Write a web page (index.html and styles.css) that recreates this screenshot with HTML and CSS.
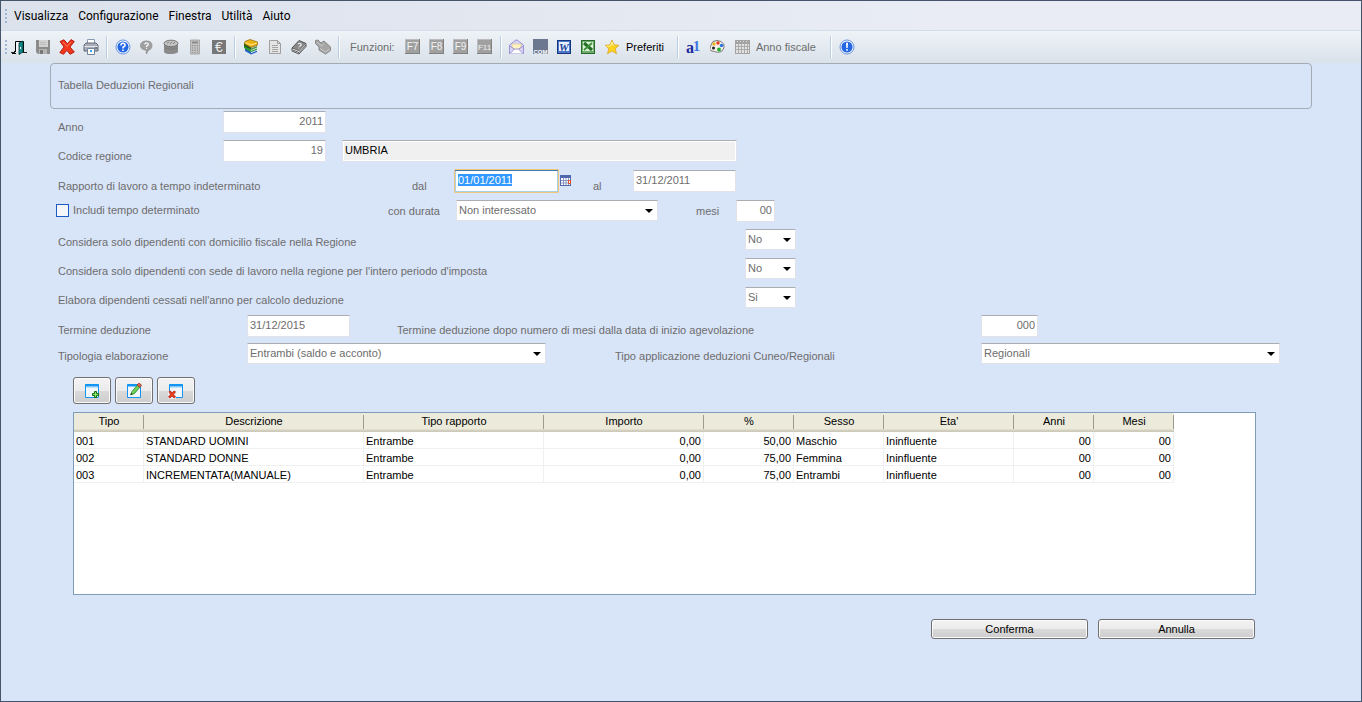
FILE: index.html
```html
<!DOCTYPE html>
<html lang="it">
<head>
<meta charset="utf-8">
<title>Tabella Deduzioni Regionali</title>
<link rel="stylesheet" href="styles.css">
</head>
<body>
<div class="window">
  <nav class="menubar" aria-label="Menu">
    <span class="grip"></span>
    <button class="menu" type="button">Visualizza</button>
    <button class="menu" type="button">Configurazione</button>
    <button class="menu" type="button">Finestra</button>
    <button class="menu" type="button">Utilità</button>
    <button class="menu" type="button">Aiuto</button>
  </nav>

  <div class="toolbar" role="toolbar" aria-label="Strumenti">
    <span class="grip"></span>
    <button class="tool" type="button" aria-label="Esci"><svg viewBox="0 0 16 16"><path d="M0 13.500h4M11 13.500h5" stroke="#222"/><path d="M4.500 13V2.500h8v11" fill="#f4f7fa" stroke="#000"/><path d="M1 14.500h4M3 12.500h2" stroke="#000"/><path d="M8 4l4-2v11l-4 2.500z" fill="#138a8a" stroke="#033" stroke-width=".8"/><path d="M9.500 8v2" stroke="#fff"/></svg></button>
    <button class="tool" type="button" aria-label="Salva"><svg viewBox="0 0 16 16"><path d="M1 1h14v14H3l-2-2z" fill="#8b8b8b"/><path d="M4 1h9v7H4z" fill="#d2d2d2"/><path d="M4 10h8v5H4z" fill="#b4b4b4"/><path d="M5 11h3v4H5z" fill="#777"/><path d="M5 3.500h6M5 5.500h6" stroke="#bbb"/></svg></button>
    <button class="tool" type="button" aria-label="Elimina"><svg viewBox="0 0 16 16"><path d="M1 2.500L5 .8l3.500 4L12 .6l3.300 1.900L11 8l4.300 5-4.300 2.300-3-4-3.500 4L.8 13.500 5 8z" fill="#f0371b" stroke="#b41508" stroke-width=".9"/><path d="M4 3l4 4.500L12 3" fill="none" stroke="#ff8a6a" stroke-width=".8"/></svg></button>
    <button class="tool" type="button" aria-label="Stampa"><svg viewBox="0 0 16 16"><path d="M4.500.5h7V6h-7z" fill="#fff" stroke="#879ab3"/><path d="M1 6l2-2h10l2 2v6H1z" fill="#a9adb9" stroke="#5a6070" stroke-width=".9"/><path d="M1.500 7.500h13" stroke="#e2e4ea"/><path d="M4.500 9.500h7v6h-7z" fill="#fff" stroke="#74829b"/><path d="M7 11h2v2H7z" fill="#3aa2ee"/><path d="M12 9h2" stroke="#444"/></svg></button>
    <span class="sep"></span>
    <button class="tool" type="button" aria-label="Guida"><svg viewBox="0 0 16 16"><circle cx="8" cy="8" r="7" fill="#fff" stroke="#5585dc" stroke-width=".9"/><circle cx="8" cy="8" r="5.600" fill="#2467e4"/><path d="M5.900 6.500q0-2.200 2.100-2.200t2.100 1.900Q10.100 7.200 8 8.200v1.300" fill="none" stroke="#fff" stroke-width="1.500"/><path d="M7.200 10.400h1.600v1.500H7.200z" fill="#fff"/></svg></button>
    <button class="tool" type="button" aria-label="Commenti"><svg viewBox="0 0 16 16"><path d="M7.500 2c4 0 5.500 2 5.500 4.500S11.500 11 9.500 11l-2 4-.5-4C3.500 11 1.500 9 1.500 6.500S3.500 2 7.500 2z" fill="#a0a0a0" stroke="#8a8a8a" stroke-width=".7"/><path d="M5.700 5.400q.2-1.600 1.900-1.600T9.300 5.400Q9.300 6.400 7.500 7v1M7.500 8.700v1.100" fill="none" stroke="#fff" stroke-width="1.200"/></svg></button>
    <button class="tool" type="button" aria-label="Archivio"><svg viewBox="0 0 16 16"><path d="M1 5v8q1 2 6.500 2T15 13V5z" fill="#8a8a8a"/><ellipse cx="8" cy="4.500" rx="7" ry="3.300" fill="#c2c2c2" stroke="#6a6a6a" stroke-width=".9"/><path d="M4 4.500l2-1.500M7 5l2-2M10 5l2-2" stroke="#777" stroke-width=".8"/><path d="M2 9q6 2.500 12 0" fill="none" stroke="#7c7c7c"/></svg></button>
    <button class="tool" type="button" aria-label="Calcolatrice"><svg viewBox="0 0 16 16"><path d="M3.500 1h9v14h-9z" fill="#c4c4c4" stroke="#9d9d9d" stroke-width=".8"/><path d="M5 3.500h6" stroke="#8a8a8a" stroke-width="2"/><path d="M5.500 6v8M8 6v8M10.500 6v8" stroke="#8c8c8c" stroke-width="1.300" stroke-dasharray="1.200 1.200"/></svg></button>
    <button class="tool" type="button" aria-label="Euro"><svg viewBox="0 0 16 16"><path d="M1 1h14v14H1z" fill="#777"/><text class="euro" x="8" y="13">€</text></svg></button>
    <span class="sep"></span>
    <button class="tool" type="button" aria-label="Libri"><svg viewBox="0 0 16 16"><path d="M2 8l6 5 6-2.500V13l-6 2.500L2 12z" fill="#2364c8"/><path d="M8 13.700l6-2.500" stroke="#fff" stroke-width=".8"/><path d="M1 5.500l7 5L14 8v2.500L8 13 1 9z" fill="#2d9a2a"/><path d="M8 11.500L14 9" stroke="#f0ffe8" stroke-width=".8"/><path d="M1 4l7 4.500L14 6v2L8 10.500 1 7z" fill="#1d5c1b"/><path d="M8 9.300l6-2.500" stroke="#fff" stroke-width=".8"/><path d="M2 2.500L7 .5 14.500 3v3L8 8.300 1.500 5z" fill="#ecb414" stroke="#8f6400" stroke-width=".7"/><path d="M2.500 3.500L8 6l6-2" fill="none" stroke="#ffe992"/></svg></button>
    <button class="tool" type="button" aria-label="Documento"><svg viewBox="0 0 16 16"><path d="M2.500 1.500h8l3 3v10h-11z" fill="#e4e4e4" stroke="#a0a0a0"/><path d="M10.500 1.500v3h3" fill="none" stroke="#999"/><path d="M5 6.500h6M5 8.500h6M5 10.500h6M5 12.500h6" stroke="#a4a4a4"/></svg></button>
    <button class="tool" type="button" aria-label="Manuale"><svg viewBox="0 0 16 16"><path d="M1 9l7-7.500 7 3L8 12z" fill="#898989" stroke="#555"/><path d="M1 9v3l7 3 7-7.500V5M2 11l6 2.500L15 6" fill="none" stroke="#555"/><path d="M2 10.200l6 2.300 6.500-7" fill="none" stroke="#eee" stroke-width=".7"/><path d="M7 5q2-1.500 3 0T8 7.500M7.500 9h.8" fill="none" stroke="#eee" stroke-width="1.200"/></svg></button>
    <button class="tool" type="button" aria-label="Etichette"><svg viewBox="0 0 16 16"><path d="M.5 1.500L3 1l3 3 3-2 6.500 6v3.500L10.500 15 4 11V8L.5 4.500z" fill="#a6a6a6" stroke="#868686"/><path d="M2 3l4.500 4L9 4.500M5 9.500l5.500 3.500 4.500-3" fill="none" stroke="#cbcbcb"/></svg></button>
    <span class="sep"></span>
    <span class="caption">Funzioni:</span>
    <button class="tool" type="button" aria-label="F7"><svg viewBox="0 0 16 16"><path d="M0 0h15v15H0z" fill="#808080"/><path d="M0 0h14v14H0z" fill="#bcbcbc"/><path d="M1 1h13v13H1z" fill="#a0a0a0"/><text class="key" x="7.500" y="11">F7</text></svg></button>
    <button class="tool" type="button" aria-label="F8"><svg viewBox="0 0 16 16"><path d="M0 0h15v15H0z" fill="#808080"/><path d="M0 0h14v14H0z" fill="#bcbcbc"/><path d="M1 1h13v13H1z" fill="#a0a0a0"/><text class="key" x="7.500" y="11">F8</text></svg></button>
    <button class="tool" type="button" aria-label="F9"><svg viewBox="0 0 16 16"><path d="M0 0h15v15H0z" fill="#808080"/><path d="M0 0h14v14H0z" fill="#bcbcbc"/><path d="M1 1h13v13H1z" fill="#a0a0a0"/><text class="key" x="7.500" y="11">F9</text></svg></button>
    <button class="tool" type="button" aria-label="F11"><svg viewBox="0 0 16 16"><path d="M0 0h15v15H0z" fill="#808080"/><path d="M0 0h14v14H0z" fill="#bcbcbc"/><path d="M1 1h13v13H1z" fill="#a0a0a0"/><text class="key small" x="7.500" y="11">F11</text></svg></button>
    <span class="sep"></span>
    <button class="tool" type="button" aria-label="Posta"><svg viewBox="0 0 16 16"><path d="M.5 6L7 1h1l6.500 5v8.500H.5z" fill="#d9d5fa" stroke="#9b94d4"/><path d="M3 5h9v4l-3 2H6L3 9z" fill="#fff3c4" stroke="#d9c68a" stroke-width=".7"/><path d="M1 14.500L5.500 10h4l4.500 4.500M.5 7l5 3M14.500 7l-5 3" fill="#fff" stroke="#9b94d4"/></svg></button>
    <button class="tool" type="button" aria-label="COM"><svg viewBox="0 0 16 16"><path d="M0 0h15v15H0z" fill="#6b7890"/><text class="com" x="7.500" y="15">COM</text></svg></button>
    <button class="tool" type="button" aria-label="Word"><svg viewBox="0 0 16 16"><path d="M0 1h14v14H0z" fill="#16377f"/><path d="M1 2h12v12H1z" fill="#4d78c9"/><path d="M2 3h10v9H2z" fill="#e9f1ff"/><text class="word" x="7" y="12">W</text></svg></button>
    <button class="tool" type="button" aria-label="Excel"><svg viewBox="0 0 16 16"><path d="M0 1h14v14H0z" fill="#276a2c"/><path d="M1 2h12v12H1z" fill="#70ad6c"/><path d="M2 3h10v9H2z" fill="#dff2da"/><path d="M3 4l8 7" stroke="#226e27" stroke-width="3"/><path d="M11 4l-8 7" stroke="#3f923e" stroke-width="2"/></svg></button>
    <button class="tool labelled" type="button"><svg viewBox="0 0 16 16"><path d="M7 1l2.100 4.800 4.900.5-3.700 3.400 1.200 5.100L7 12l-4.500 2.800 1.200-5.100L.2 6.300l4.700-.5z" fill="#ffd21d" stroke="#d9a62c" stroke-width=".8"/><path d="M7 3L5.500 7l-4 .2M7 3l1.500 4" fill="none" stroke="#fff2a0"/></svg>Preferiti</button>
    <span class="sep"></span>
    <button class="tool" type="button" aria-label="Carattere"><svg viewBox="0 0 16 16"><text class="letter" x="0" y="14">a</text><text class="digit" x="7" y="12">1</text></svg></button>
    <button class="tool" type="button" aria-label="Colori"><svg viewBox="0 0 16 16"><path d="M3 2.500Q7 .5 11 2.500t3 6-4 4.500-4 0-4-1-1.500-4.500 2.500-5z" fill="#f4f1ea" stroke="#777"/><circle cx="4" cy="5" r="1.700" fill="#e9b520"/><circle cx="8" cy="4" r="1.700" fill="#e8401c"/><circle cx="11.500" cy="6.500" r="1.700" fill="#2774e8"/><circle cx="9" cy="10.500" r="1.900" fill="#1fae2c"/><circle cx="3.500" cy="9" r="1.500" fill="#222"/></svg></button>
    <button class="tool labelled muted" type="button"><svg viewBox="0 0 16 16"><path d="M1 1h15v14H1z" fill="#a3a3a3"/><path d="M2 5h13v9H2z" fill="#e2e2e2"/><path d="M2 7.500h13M2 10.500h13M4.500 5v9M7.500 5v9M10.500 5v9M13.500 5v9" stroke="#aaa"/><path d="M3 2.500h11" stroke="#ddd" stroke-dasharray="1 2"/></svg>Anno fiscale</button>
    <span class="sep"></span>
    <button class="tool" type="button" aria-label="Informazioni"><svg viewBox="0 0 16 16"><circle cx="8" cy="8" r="7" fill="#fff" stroke="#5585dc" stroke-width=".9"/><circle cx="8" cy="8" r="5.600" fill="#2467e4"/><path d="M7 3.800h2L8.700 9H7.300zM7.200 10h1.600v1.700H7.200z" fill="#fff"/></svg></button>
  </div>

  <main class="content">
    <h1 class="title">Tabella Deduzioni Regionali</h1>

    <form class="form">
      <div class="row year">
        <label for="anno">Anno</label>
        <input class="field num" id="anno" value="2011">
      </div>
      <div class="row region">
        <label for="regione">Codice regione</label>
        <input class="field num" id="regione" value="19">
        <input class="field readonly" aria-label="Nome regione" value="UMBRIA" readonly>
      </div>
      <div class="row period">
        <span class="text">Rapporto di lavoro a tempo indeterminato</span>
        <label for="dal">dal</label>
        <input class="field active" id="dal" value="01/01/2011">
        <button class="calendar" type="button" aria-label="Calendario"><svg viewBox="0 0 12 12"><path d="M0 0h11v11H0z" fill="#5268ae"/><path d="M1 3h9v7H1z" fill="#fff"/><path d="M1 5.500h9M1 8h9M3.500 3v7M6 3v7M8.500 3v7" stroke="#7182ba" stroke-width=".8"/><path d="M8.500 5.500h2v3h-2z" fill="#fff" stroke="#e24a22"/></svg></button>
        <label for="al">al</label>
        <input class="field" id="al" value="31/12/2011">
      </div>
      <div class="row duration">
        <label class="check"><input type="checkbox">Includi tempo determinato</label>
        <label for="durata">con durata</label>
        <span class="pick"><select id="durata"><option>Non interessato</option></select></span>
        <label for="mesi">mesi</label>
        <input class="field num" id="mesi" value="00">
      </div>
      <div class="row choice">
        <label for="domicilio">Considera solo dipendenti con domicilio fiscale nella Regione</label>
        <span class="pick"><select id="domicilio"><option>No</option><option>Si</option></select></span>
      </div>
      <div class="row choice">
        <label for="sede">Considera solo dipendenti con sede di lavoro nella regione per l'intero periodo d'imposta</label>
        <span class="pick"><select id="sede"><option>No</option><option>Si</option></select></span>
      </div>
      <div class="row choice">
        <label for="cessati">Elabora dipendenti cessati nell'anno per calcolo deduzione</label>
        <span class="pick"><select id="cessati"><option>Si</option><option>No</option></select></span>
      </div>
      <div class="row term">
        <label for="termine">Termine deduzione</label>
        <input class="field" id="termine" value="31/12/2015">
        <label for="dopo">Termine deduzione dopo numero di mesi dalla data di inizio agevolazione</label>
        <input class="field num" id="dopo" value="000">
      </div>
      <div class="row kind">
        <label for="tipologia">Tipologia elaborazione</label>
        <span class="pick"><select id="tipologia"><option>Entrambi (saldo e acconto)</option></select></span>
        <label for="applicazione">Tipo applicazione deduzioni Cuneo/Regionali</label>
        <span class="pick"><select id="applicazione"><option>Regionali</option></select></span>
      </div>
    </form>

    <section class="details">
      <div class="actions">
        <button class="push" type="button" aria-label="Aggiungi"><svg viewBox="0 0 16 16"><path d="M1.500 1.500h13v13h-13z" fill="#f2f7fe" stroke="#1394f2"/><path d="M1 2.500h14" stroke="#1394f2" stroke-width="2"/><path d="M2 4.500h12" stroke="#bfe0fb"/><path d="M10.500 8.500h2v2h2v2h-2v2h-2v-2h-2v-2h2z" fill="#8be36b" stroke="#0b6e0b"/></svg></button>
        <button class="push" type="button" aria-label="Modifica"><svg viewBox="0 0 16 16"><path d="M1.500 1.500h13v13h-13z" fill="#f2f7fe" stroke="#1394f2"/><path d="M1 2.500h14" stroke="#1394f2" stroke-width="2"/><path d="M4.500 12L6 8.500 11.500 2l2.500 2L8.500 10.500z" fill="#6bd25a" stroke="#24842a" stroke-width=".8"/><path d="M11 2l2-2 2.500 2L14 4.500z" fill="#e0664c" stroke="#963024" stroke-width=".7"/><path d="M4.500 12l.8-2 1.200 1z" fill="#222"/></svg></button>
        <button class="push" type="button" aria-label="Rimuovi"><svg viewBox="0 0 16 16"><path d="M1.500 1.500h13v13h-13z" fill="#f2f7fe" stroke="#1394f2"/><path d="M1 2.500h14" stroke="#1394f2" stroke-width="2"/><path d="M2 4.500h12" stroke="#bfe0fb"/><path d="M0 8h8v8H0z" fill="#eaeaea"/><path d="M1 8.500l1.500-.5L4 10l2-2 1.500.8L5.500 11.500 7.500 14 6 15 4 13l-2 2-1.500-1 2-2.500z" fill="#ee4124" stroke="#b3200f" stroke-width=".8"/></svg></button>
      </div>

      <div class="grid">
        <table>
          <colgroup><col class="w70"><col class="w220"><col class="w180"><col class="w160"><col class="w90"><col class="w90"><col class="w130"><col class="w80"><col class="w80"></colgroup>
          <thead>
            <tr><th>Tipo</th><th>Descrizione</th><th>Tipo rapporto</th><th>Importo</th><th>%</th><th>Sesso</th><th>Eta'</th><th>Anni</th><th>Mesi</th></tr>
          </thead>
          <tbody>
            <tr><td>001</td><td>STANDARD UOMINI</td><td>Entrambe</td><td class="r">0,00</td><td class="r">50,00</td><td>Maschio</td><td>Ininfluente</td><td class="r">00</td><td class="r">00</td></tr>
            <tr><td>002</td><td>STANDARD DONNE</td><td>Entrambe</td><td class="r">0,00</td><td class="r">75,00</td><td>Femmina</td><td>Ininfluente</td><td class="r">00</td><td class="r">00</td></tr>
            <tr><td>003</td><td>INCREMENTATA(MANUALE)</td><td>Entrambe</td><td class="r">0,00</td><td class="r">75,00</td><td>Entrambi</td><td>Ininfluente</td><td class="r">00</td><td class="r">00</td></tr>
          </tbody>
        </table>
      </div>

      <div class="confirm">
        <button class="push wide" type="button">Conferma</button>
        <button class="push wide" type="button">Annulla</button>
      </div>
    </section>
  </main>
</div>
<script src="page.js"></script>
</body>
</html>
```
FILE: styles.css
```css
* { box-sizing: border-box; }

body {
  margin: 0;
  font: 11px/14px "Liberation Sans", Arial, sans-serif;
  color: #000;
}

button, input, select { font: inherit; color: inherit; margin: 0; }
button { padding: 0; border: 0; background: none; }
svg { display: block; }

.window {
  min-height: 100vh;
  border: 1px solid #44546a;
  background: #d8e4f8;
}

/* menu and toolbar */
.menubar {
  display: flex;
  align-items: center;
  height: 30px;
  padding-left: 4px;
  background: linear-gradient(90deg, #dbe2ec, #e9ecf5 70%);
  border-bottom: 1px solid #d3dde9;
}

.menubar .grip { margin-right: 2px; }

.menu {
  padding: 0 5px;
  font: 12px/18px Roboto, "Noto Sans", sans-serif;
}

.grip {
  flex: none;
  width: 2px;
  height: 14px;
  background: repeating-linear-gradient(#9fb6d6 0 2px, transparent 2px 4px);
}

.toolbar {
  display: flex;
  align-items: center;
  height: 32px;
  padding-left: 4px;
  background: linear-gradient(#eef3f7, #d9e1ea);
}

.tool {
  display: flex;
  align-items: center;
  gap: 5px;
  padding: 0 4px;
  white-space: nowrap;
}

.tool svg { width: 16px; height: 16px; flex: none; }
.labelled { padding-right: 10px; }
.muted { gap: 6px; padding-right: 11px; }
.muted, .caption { color: #6d6d6d; }
.caption { width: 58px; padding-left: 7px; }

.key {
  font: 10px "Liberation Sans", sans-serif;
  fill: #f4f4f4;
  text-anchor: middle;
}

.small { font-size: 8px; }
.euro { font: 14px "Liberation Sans", sans-serif; fill: #eee; text-anchor: middle; }
.com { font: bold 6px "Liberation Sans", sans-serif; fill: #fff; text-anchor: middle; }
.word { font: italic bold 11px "Liberation Serif", serif; fill: #173e96; text-anchor: middle; }
.letter { font: bold 16px "Liberation Serif", serif; fill: #1a2b9b; }
.digit { font: bold 14px "Liberation Serif", serif; fill: #3d75e0; }

.sep {
  flex: none;
  width: 2px;
  height: 22px;
  margin: 0 3px;
  background: linear-gradient(90deg, #b7cde6 50%, #fff 50%);
}

/* form */
.content { padding: 0 49px; color: #6d6d6d; }

.title {
  margin: 0;
  padding: 14px 7px 16px;
  font: inherit;
  border: 1px solid #a3abb5;
  border-radius: 4px;
}

.form {
  display: flex;
  flex-direction: column;
  gap: 7px;
  padding: 2px 0 0 8px;
}

.row { display: grid; align-items: start; height: 22px; white-space: nowrap; }
.row > label, .row > .text { padding-top: 9px; }
.year { grid-template-columns: 165px 103px; }
.region { grid-template-columns: 165px 103px 16px 395px; }
.region .readonly { grid-column: 4; }
.period { grid-template-columns: 354px 42px 105px 34px 40px 103px; margin-top: 1px; }
.duration { grid-template-columns: 330px 68px 202px 38px 40px 39px; margin-top: 1px; }
.duration > label { padding-top: 4px; }
.duration label[for="mesi"] { grid-column: 4 / 6; padding-left: 38px; }
.choice { grid-template-columns: 687px 51px; }
.choice > label { padding-top: 6px; }
.term { grid-template-columns: 189px 103px 47px 584px 57px; margin-top: -1px; }
.term > label { padding-top: 8px; }
.term label[for="dopo"] { grid-column: 4; }
.kind { grid-template-columns: 189px 299px 69px 366px 299px; margin-top: -1px; }
.kind > label { padding-top: 6px; }
.kind label[for="applicazione"] { grid-column: 4; }
.kind .pick:last-child { grid-column: 5; }

.field {
  width: 100%;
  height: 22px;
  padding: 0 2px 2px;
  background: #fff;
  border: 1px solid #e2e3ea;
  border-top-color: #abadb3;
  border-radius: 1px;
}

.num { text-align: right; }
.readonly { color: #000; background: #f0f0f0; box-shadow: inset 0 0 0 1px #fff; }

.active {
  height: 24px;
  margin-top: -1px;
  padding: 0 3px 3px;
  border: 1px solid #f3c57a;
  box-shadow: inset 0 1px #3d7bad, inset 0 0 0 1px #a6d0e8;
  outline: none;
}

.active::selection { color: #fff; background: #3399ff; }

.calendar { margin: 5px 0 0 1px; width: 12px; }
.calendar svg { width: 12px; height: 12px; }

.row > .check { display: flex; align-items: center; gap: 4px; height: 20px; margin-left: -2px; padding: 0; }

.check input {
  appearance: none;
  width: 13px;
  height: 13px;
  border: 1px solid #1c5ac0;
  background: #f4f6f9;
}

.pick { position: relative; display: block; }

.pick::after {
  content: "";
  position: absolute;
  right: 5px;
  top: 9px;
  border: 4px solid transparent;
  border-top-color: #000;
  border-bottom: 0;
  pointer-events: none;
}

.pick select {
  appearance: none;
  display: block;
  width: 100%;
  height: 21px;
  padding: 0 2px 2px;
  background: #fff;
  border: 1px solid #e2e3ea;
  border-top-color: #abadb3;
  border-radius: 1px;
}

/* details */
.details { padding: 12px 56px 0 23px; color: #000; }
.actions { display: flex; gap: 4px; }

.push {
  display: flex;
  align-items: center;
  justify-content: center;
  width: 38px;
  height: 27px;
  border: 1px solid #707070;
  border-radius: 3px;
  background: linear-gradient(#f3f3f3, #ebebeb 50%, #dadada 50%, #cdcdcd);
  box-shadow: inset 0 0 0 1px #fafafa;
}

.push svg { width: 16px; height: 16px; }

.grid {
  min-height: 183px;
  margin-top: 8px;
  background: #fff;
  border: 1px solid #7f9db9;
}

table { width: 1100px; table-layout: fixed; border-collapse: separate; border-spacing: 0; }
.w70 { width: 70px; }
.w80 { width: 80px; }
.w90 { width: 90px; }
.w130 { width: 130px; }
.w160 { width: 160px; }
.w180 { width: 180px; }
.w220 { width: 220px; }

th {
  height: 19px;
  padding: 0 0 3px;
  font-weight: normal;
  line-height: 16px;
  background:
    linear-gradient(#9c9a8c, #9c9a8c) right 2px / 1px 14px no-repeat,
    linear-gradient(#ebeadb 16px, #d6d2c2 17px, #cbc7b8 19px);
}

td {
  height: 17px;
  padding: 2px 2px 0;
  border-right: 1px solid #f0f0f0;
  border-bottom: 1px solid #f0f0f0;
}

.r { text-align: right; }

.confirm { display: flex; justify-content: flex-end; gap: 10px; padding: 24px 1px 20px 0; }
.wide { width: 157px; height: 20px; }
```
FILE: page.js
```js
const startDate = document.getElementById("dal");
startDate.focus();
startDate.select();
```
